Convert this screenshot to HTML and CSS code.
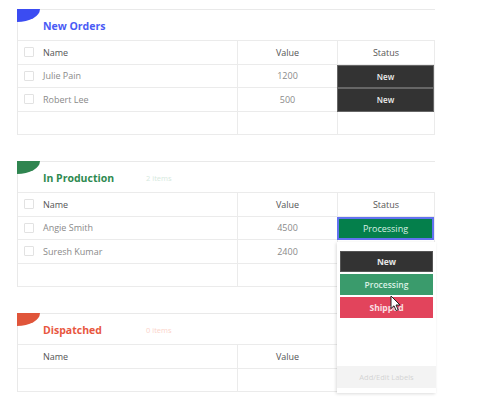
FILE: index.html
```html
<!DOCTYPE html>
<html>
<head>
<meta charset="utf-8">
<link rel="stylesheet" href="styles.css">
</head>
<body>
<div class="board">
  <section class="group blue">
    <div class="group-head"><span class="corner"></span><h2 class="title">New Orders</h2></div>
    <div class="table">
      <div class="row head"><div class="cell name"><span class="cb"></span>Name</div><div class="cell val">Value</div><div class="cell status">Status</div></div>
      <div class="row"><div class="cell name"><span class="cb"></span>Julie Pain</div><div class="cell val">1200</div><div class="cell status"><span class="badge dark">New</span></div></div>
      <div class="row"><div class="cell name"><span class="cb"></span>Robert Lee</div><div class="cell val">500</div><div class="cell status"><span class="badge dark">New</span></div></div>
      <div class="row"><div class="cell name"></div><div class="cell val"></div><div class="cell status"></div></div>
    </div>
  </section>

  <section class="group green">
    <div class="group-head"><span class="corner"></span><h2 class="title">In Production</h2><span class="count">2 items</span></div>
    <div class="table">
      <div class="row head"><div class="cell name"><span class="cb"></span>Name</div><div class="cell val">Value</div><div class="cell status">Status</div></div>
      <div class="row"><div class="cell name"><span class="cb"></span>Angie Smith</div><div class="cell val">4500</div><div class="cell status"><span class="badge prod focus">Processing</span></div></div>
      <div class="row"><div class="cell name"><span class="cb"></span>Suresh Kumar</div><div class="cell val">2400</div><div class="cell status"></div></div>
      <div class="row"><div class="cell name"></div><div class="cell val"></div><div class="cell status"></div></div>
    </div>
  </section>

  <section class="group red">
    <div class="group-head"><span class="corner"></span><h2 class="title">Dispatched</h2><span class="count">0 items</span></div>
    <div class="table">
      <div class="row head"><div class="cell name">Name</div><div class="cell val">Value</div><div class="cell status">Status</div></div>
      <div class="row"><div class="cell name"></div><div class="cell val"></div><div class="cell status"></div></div>
    </div>
  </section>

  <div class="dropdown">
    <div class="opt dark">New</div>
    <div class="opt proc">Processing</div>
    <div class="opt ship">Shipped</div>
    <div class="edit">Add/Edit Labels</div>
  </div>

  <svg class="cursor" width="12" height="17" viewBox="0 0 12 17">
    <path d="M1 1 L1 13.5 L4 10.8 L6.2 15.6 L8.2 14.7 L6 10 L10 10 Z" fill="#fff" stroke="#222" stroke-width="1" stroke-linejoin="round"/>
  </svg>
</div>
</body>
</html>
```

FILE: styles.css
```css
* { box-sizing: border-box; }
html, body { margin: 0; padding: 0; background: #fff; }
body {
  font-family: "Open Sans", "Liberation Sans", sans-serif;
  width: 480px;
  height: 401px;
  overflow: hidden;
}
.board {
  position: relative;
  padding-top: 9px;
  height: 401px;
}
.group {
  margin-left: 17px;
  width: 418px;
  border-top: 1px solid #e9e9e9;
  border-left: 1px solid #e9e9e9;
  margin-bottom: 26px;
}
.group-head {
  position: relative;
  height: 30px;
  display: flex;
  align-items: center;
  padding-left: 25px;
  padding-top: 1px;
}
.corner {
  position: absolute;
  left: -1px;
  top: -1px;
  width: 23px;
  height: 13px;
  border-bottom-right-radius: 100% 100%;
}
.blue .corner { background: #3b4cf2; }
.green .corner { background: #2f8550; }
.red .corner { background: #e0553a; }
.title {
  margin: 0;
  font-size: 10.5px;
  font-weight: 700;
  min-width: 103px;
}
.blue .title { color: #4a5bf5; }
.green .title { color: #2e8a50; }
.red .title { color: #e8573f; }
.count {
  font-size: 7.5px;
  color: #d6e9de;
}
.red .count { color: #fbd3ca; }
.table {
  width: 417px;
  border-top: 1px solid #ebebeb;
  border-right: 1px solid #ebebeb;
}
.row {
  display: grid;
  grid-template-columns: 220px 100px 96px;
  height: 23.5px;
  border-bottom: 1px solid #ebebeb;
}
.cell {
  display: flex;
  align-items: center;
  font-size: 9px;
  color: #8a8a8a;
  border-right: 1px solid #ebebeb;
  position: relative;
}
.cell.status { border-right: none; }
.head .cell { color: #555; }
.cell.name { padding-left: 25px; }
.cell.val, .cell.status { justify-content: center; }
.cb {
  position: absolute;
  left: 6px;
  top: 50%;
  margin-top: -5px;
  width: 10px;
  height: 10px;
  border: 1px solid #e2e2e2;
  border-radius: 1px;
}
.badge {
  display: flex;
  align-items: center;
  justify-content: center;
  width: calc(100% + 1px);
  margin-left: -1px;
  height: calc(100% + 1px);
  margin-bottom: -1px;
  color: #fff;
  font-size: 8px;
  font-weight: 600;
}
.badge.dark {
  background: #333;
  border: 1px solid #666;
  color: #eee;
}
.badge.prod {
  background: #047f4b;
  color: #d8f0e4;
  font-size: 9px;
  font-weight: 500;
}
.badge.focus {
  border: 2px solid #6272f0;
}
.dropdown {
  position: absolute;
  left: 337px;
  top: 242px;
  width: 99px;
  height: 151px;
  background: #fff;
  box-shadow: -1px 1px 3px rgba(0,0,0,0.14);
  padding: 9px 3px 0 3px;
  display: flex;
  flex-direction: column;
  gap: 2px;
}
.opt {
  height: 21px;
  display: flex;
  align-items: center;
  justify-content: center;
  color: #fff;
  font-size: 8.5px;
  font-weight: 700;
}
.opt.dark { background: #333; border: 1px solid #555; color: #e6e6e6; }
.opt.proc { background: #3a9b6c; color: #d9f1e4; font-weight: 600; }
.opt.ship { background: #e2445c; color: #fbe0e4; }
.edit {
  margin: auto -3px 5px -3px;
  height: 22px;
  background: #f3f3f3;
  display: flex;
  align-items: center;
  justify-content: center;
  font-size: 7.5px;
  color: #d4d4d4;
}
.cursor {
  position: absolute;
  left: 390px;
  top: 295px;
}
```
